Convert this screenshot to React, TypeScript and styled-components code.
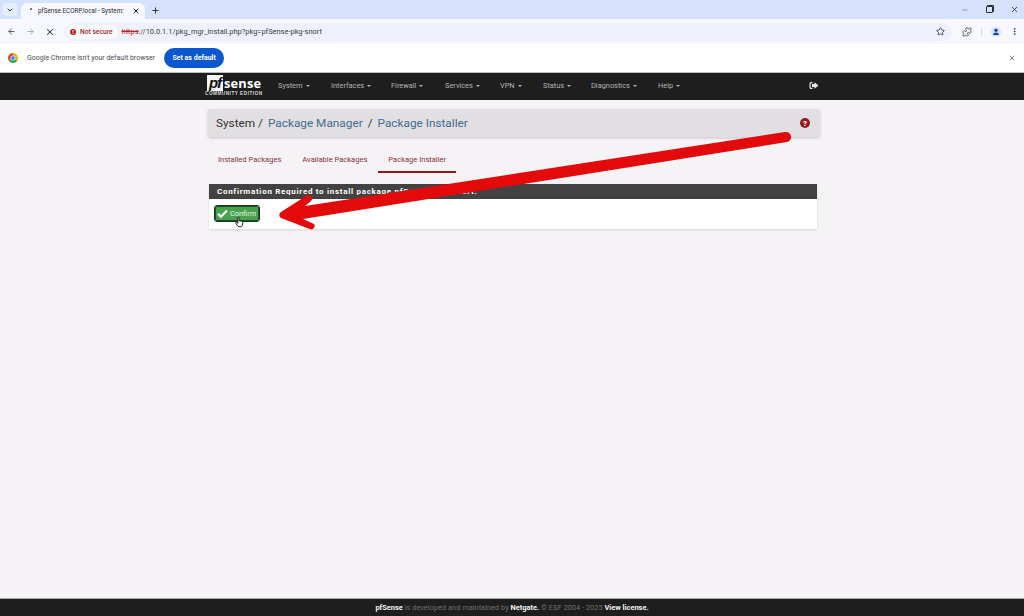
import styled, { createGlobalStyle } from "styled-components";
import { ArrowLeft, ArrowRight, X, Plus, ChevronDown, Minus, Star, Puzzle, EllipsisVertical, User } from "lucide-react";

const GlobalStyle = createGlobalStyle`
    html, body {
        margin: 0;
        padding: 0;
        height: 100%;
        overflow: hidden;
    }
    #root {
        height: 100%;
    }
`;

const Page = styled.div`
    position: relative;
    display: flex;
    flex-direction: column;
    height: 616px;
    background-color: #f5f3f6;
    font-family: Roboto, "Liberation Sans", sans-serif;
    overflow: hidden;
`;

const TabStrip = styled.div`
    display: flex;
    align-items: flex-end;
    height: 19px;
    flex-shrink: 0;
    background-color: #d6e2fb;
    color: #2a2d33;
`;

const TabMenu = styled.div`
    display: flex;
    align-items: center;
    justify-content: center;
    width: 14px;
    height: 13px;
    margin: 0 4px 3px 3px;
    border-radius: 4px;
    background-color: #e6eefc;
`;

const ActiveTab = styled.div`
    display: flex;
    align-items: center;
    width: 124px;
    height: 16px;
    box-sizing: border-box;
    padding: 0 5px 0 9px;
    border-radius: 6px 6px 0 0;
    background-color: #f6f8fe;
    font-size: 6.3px;
`;

const TabSpinner = styled.span`
    width: 2px;
    height: 2px;
    margin: 0 6px 5px 0;
    border-radius: 50%;
    background-color: #555;
`;

const TabTitle = styled.span`
    flex: 1;
    white-space: nowrap;
`;

const NewTab = styled.div`
    display: flex;
    align-items: center;
    margin: 0 0 4px 6px;
`;

const WindowControls = styled.div`
    display: flex;
    align-items: center;
    gap: 17px;
    margin: 0 5px 5px auto;
`;

const RestoreIcon = styled.span`
    width: 5px;
    height: 5px;
    border: 1px solid #2a2d33;
    border-radius: 1px;
    box-shadow: 1px -1px 0 0 #2a2d33;
`;

const Toolbar = styled.div`
    display: flex;
    align-items: center;
    height: 25px;
    flex-shrink: 0;
    padding: 0 5px 0 7px;
    background-color: #f6f8fe;
`;

const NavButtons = styled.div`
    display: flex;
    align-items: center;
    gap: 10px;
    width: 57px;
`;

const AddressBar = styled.div`
    display: flex;
    align-items: center;
    width: 888px;
    height: 18px;
    box-sizing: border-box;
    padding: 0 7px 0 3px;
    border-radius: 9px;
    background-color: #eef1fb;
`;

const SecurityChip = styled.div`
    display: flex;
    align-items: center;
    gap: 4px;
    height: 14px;
    padding: 0 5px 0 3px;
    margin-right: 4px;
    border-radius: 7px;
    background-color: #f8f9fe;
    color: #a52a2a;
    font-size: 6.7px;
    font-weight: 500;
`;

const AlertDot = styled.span`
    display: flex;
    align-items: center;
    justify-content: center;
    width: 6px;
    height: 6px;
    border-radius: 50%;
    background-color: #b3261e;
    color: #fff;
    font-size: 5px;
    font-weight: 700;
`;

const Url = styled.span`
    flex: 1;
    color: #3c4043;
    font-size: 7.45px;
`;

const Struck = styled.span`
    color: #b3261e;
    text-decoration: line-through;
`;

const ToolbarIcons = styled.div`
    display: flex;
    align-items: center;
    margin-left: 10px;
    gap: 9px;
    color: #3c4043;
`;

const Divider = styled.span`
    width: 1px;
    height: 8px;
    background-color: #d4d8e2;
`;

const Avatar = styled.span`
    display: flex;
    align-items: center;
    justify-content: center;
    width: 10px;
    height: 10px;
    border-radius: 50%;
    background-color: #d3e3fd;
    color: #1f3f9e;
`;

const InfoBar = styled.div`
    display: flex;
    align-items: center;
    height: 29px;
    flex-shrink: 0;
    box-sizing: border-box;
    padding: 0 8px 0 8px;
    background-color: #ffffff;
    color: #4a4d52;
    font-size: 7px;
    border-bottom: 1px solid #bdbdbd;
`;

const InfoText = styled.span`
    margin-left: 9px;
`;

const DefaultButton = styled.button`
    height: 20px;
    width: 60px;
    margin-left: 9px;
    padding: 0;
    border: none;
    border-radius: 10px;
    background-color: #0b57d0;
    color: #fff;
    font-family: inherit;
    font-size: 7px;
    font-weight: 700;
`;

const InfoClose = styled.span`
    display: flex;
    margin-left: auto;
    color: #555;
`;

const NavBar = styled.nav`
    display: flex;
    align-items: center;
    height: 27px;
    flex-shrink: 0;
    box-sizing: border-box;
    padding: 0 0 2px 205px;
    background-color: #1e1e1e;
    color: #b4b4b4;
    font-size: 7.4px;
`;

const Logo = styled.div`
    display: flex;
    flex-direction: column;
    width: 57px;
    margin: 1px 16px 0 0;
    color: #fff;
`;

const LogoTop = styled.div`
    display: flex;
    align-items: center;
    height: 16px;
    padding-left: 2px;
`;

const LogoBox = styled.span`
    width: 16px;
    height: 16px;
    background-color: #f4f4f4;
    color: #111;
    font: italic 700 15px/15px "Liberation Sans", sans-serif;
    letter-spacing: -1px;
    text-align: center;
`;

const LogoWord = styled.span`
    margin-left: 1px;
    font: 700 12.8px/16px "Open Sans", sans-serif;
    letter-spacing: 0.2px;
`;

const LogoEdition = styled.span`
    font: 700 4.7px/6px "Liberation Sans", sans-serif;
    letter-spacing: 0.5px;
    white-space: nowrap;
    color: #d8d8d8;
`;

const NavItem = styled.span<{ $width: number }>`
    display: flex;
    align-items: center;
    gap: 2px;
    width: ${(p) => p.$width}px;
    white-space: nowrap;
`;

const Caret = styled.span`
    width: 0;
    height: 0;
    margin-left: 1px;
    border-left: 2px solid transparent;
    border-right: 2px solid transparent;
    border-top: 2px solid #b4b4b4;
`;

const Logout = styled.span`
    display: flex;
    margin-left: 115px;
`;

const Main = styled.main`
    flex: 1;
    display: flex;
    flex-direction: column;
    padding: 9px 204px 0 208px;
`;

const Breadcrumb = styled.div`
    display: flex;
    align-items: center;
    height: 28px;
    box-sizing: border-box;
    padding: 0 10px 0 8px;
    border-radius: 3px;
    background-color: #e1dfe1;
    box-shadow: 0 1px 3px rgba(0, 0, 0, 0.2);
    font-size: 11.8px;
    color: #333;
`;

const Crumb = styled.span<{ $link?: boolean }>`
    margin-right: 5px;
    color: ${(p) => (p.$link ? "#3f6d93" : "#333")};
`;

const HelpDot = styled.span`
    display: flex;
    align-items: center;
    justify-content: center;
    width: 10px;
    height: 10px;
    margin-left: auto;
    border-radius: 50%;
    background-color: #8f1a1f;
    color: #fff;
    font-size: 8px;
    font-weight: 700;
`;

const Tabs = styled.div`
    display: flex;
    margin-top: 12px;
    height: 24px;
`;

const TabLink = styled.span<{ $active?: boolean }>`
    display: flex;
    align-items: center;
    height: 24px;
    box-sizing: border-box;
    padding: 0 10px 2px;
    margin-right: 1px;
    color: #8c2f3c;
    font-size: 7.55px;
    border-bottom: 2px solid ${(p) => (p.$active ? "#8f1a1f" : "transparent")};
`;

const Panel = styled.section`
    width: 608px;
    margin: 11px 0 0 1px;
    background-color: #fff;
    box-shadow: 0 1px 2px rgba(0, 0, 0, 0.12);
`;

const PanelHeading = styled.h2`
    height: 15px;
    margin: 0;
    padding-left: 8px;
    background-color: #424242;
    color: #fff;
    font-size: 8px;
    font-weight: 700;
    line-height: 15px;
    letter-spacing: 0.7px;
    white-space: nowrap;
`;

const PanelBody = styled.div`
    height: 30px;
    padding: 7px 0 0 6px;
    box-sizing: border-box;
`;

const ConfirmButton = styled.button`
    position: relative;
    display: flex;
    align-items: center;
    gap: 2px;
    width: 44px;
    height: 15px;
    box-sizing: border-box;
    padding: 0 0 0 1px;
    border: 1px solid #1f4f2a;
    outline: 1px solid #17361d;
    border-radius: 2px;
    background-color: #47a04b;
    color: #e8f5e6;
    font-family: inherit;
    font-size: 7.4px;
`;

const HandCursor = styled.svg`
    position: absolute;
    left: 19px;
    top: 8px;
`;

const Arrow = styled.svg`
    position: absolute;
    inset: 0;
    pointer-events: none;
`;

const Footer = styled.footer`
    display: flex;
    align-items: center;
    justify-content: center;
    height: 18px;
    flex-shrink: 0;
    background-color: #1e1e1e;
    color: #6f6f6f;
    font-size: 7.45px;
    border-top: 1px solid #a9a9a9;
    box-sizing: border-box;
    white-space: pre;
`;

const FooterStrong = styled.b`
    color: #f2f2f2;
`;

const navItems: [string, number][] = [
    ["System", 53],
    ["Interfaces", 60],
    ["Firewall", 54],
    ["Services", 55],
    ["VPN", 43],
    ["Status", 48],
    ["Diagnostics", 67],
    ["Help", 36],
];

export default function App() {
    return (
        <Page>
            <GlobalStyle />
            <TabStrip>
                <TabMenu><ChevronDown size={8} strokeWidth={3} /></TabMenu>
                <ActiveTab>
                    <TabSpinner />
                    <TabTitle>pfSense.ECORP.local - System: </TabTitle>
                    <X size={8} strokeWidth={3} />
                </ActiveTab>
                <NewTab><Plus size={9} strokeWidth={2.5} /></NewTab>
                <WindowControls>
                    <Minus size={8} color="#777" />
                    <RestoreIcon />
                    <X size={9} strokeWidth={2.2} />
                </WindowControls>
            </TabStrip>

            <Toolbar>
                <NavButtons>
                    <ArrowLeft size={9} color="#555" strokeWidth={2.5} />
                    <ArrowRight size={9} color="#aaa" strokeWidth={2.5} />
                    <X size={10} color="#333" strokeWidth={2.5} />
                </NavButtons>
                <AddressBar>
                    <SecurityChip><AlertDot>!</AlertDot>Not secure</SecurityChip>
                    <Url><Struck>https</Struck>://10.0.1.1/pkg_mgr_install.php?pkg=pfSense-pkg-snort</Url>
                    <Star size={9} color="#333" strokeWidth={2.2} />
                </AddressBar>
                <ToolbarIcons>
                    <Puzzle size={10} strokeWidth={2} />
                    <Divider />
                    <Avatar><User size={8} fill="#1f3f9e" strokeWidth={2} /></Avatar>
                    <EllipsisVertical size={9} strokeWidth={2.5} />
                </ToolbarIcons>
            </Toolbar>

            <InfoBar>
                <svg width="10" height="10" viewBox="0 0 20 20">
                    <path d="M10 10 L10 0 A10 10 0 0 1 18.66 15 Z" fill="#f4b400" />
                    <path d="M10 10 L18.66 15 A10 10 0 0 1 1.34 15 Z" fill="#2f9e50" />
                    <path d="M10 10 L1.34 15 A10 10 0 0 1 10 0 Z" fill="#db4437" />
                    <circle cx="10" cy="10" r="5" fill="#fff" />
                    <circle cx="10" cy="10" r="3.8" fill="#4285f4" />
                </svg>
                <InfoText>Google Chrome isn't your default browser</InfoText>
                <DefaultButton>Set as default</DefaultButton>
                <InfoClose><X size={8} strokeWidth={2.2} /></InfoClose>
            </InfoBar>

            <NavBar>
                <Logo>
                    <LogoTop>
                        <LogoBox>pf</LogoBox>
                        <LogoWord>sense</LogoWord>
                    </LogoTop>
                    <LogoEdition>COMMUNITY EDITION</LogoEdition>
                </Logo>
                {navItems.map(([label, width]) => (
                    <NavItem key={label} $width={width}>
                        {label}
                        <Caret />
                    </NavItem>
                ))}
                <Logout>
                    <svg width="10" height="9" viewBox="0 0 20 18" fill="#e6e6e6">
                        <path d="M7 2H4a3 3 0 0 0-3 3v8a3 3 0 0 0 3 3h3v-2.4H4.4a1 1 0 0 1-1-1V5.400a1 1 0 0 1 1-1H7Z" />
                        <path d="M11 2.500 19 9l-8 6.500V12H6V6h5Z" />
                    </svg>
                </Logout>
            </NavBar>

            <Main>
                <Breadcrumb>
                    <Crumb>System /</Crumb>
                    <Crumb $link>Package Manager</Crumb>
                    <Crumb>/</Crumb>
                    <Crumb $link>Package Installer</Crumb>
                    <HelpDot>?</HelpDot>
                </Breadcrumb>

                <Tabs>
                    <TabLink>Installed Packages</TabLink>
                    <TabLink>Available Packages</TabLink>
                    <TabLink $active>Package Installer</TabLink>
                </Tabs>

                <Panel>
                    <PanelHeading>Confirmation Required to install package pfSense-pkg-snort.</PanelHeading>
                    <PanelBody>
                        <ConfirmButton>
                            <svg width="11" height="9" viewBox="0 0 22 18">
                                <path d="M2 9.500 8 15.500 20 3" fill="none" stroke="#fff" strokeWidth="4.500" />
                            </svg>
                            Confirm
                            <HandCursor width="9" height="14" viewBox="0 0 22 28">
                                <path
                                    d="M7 2.500c1.500-1.300 3-.5 3 1.500v7l6 1c2.500.5 3.500 1.800 3 4l-1.200 6c-.4 2-1.500 3.500-3.500 3.500H10c-1.800 0-3-.8-4-2.400L2 17c-1-1.700 1-3.200 2.500-1.800L7 17Z"
                                    fill="#fff"
                                    stroke="#222"
                                    strokeWidth="2.400"
                                />
                            </HandCursor>
                        </ConfirmButton>
                    </PanelBody>
                </Panel>
            </Main>

            <Footer>
                <FooterStrong>pfSense</FooterStrong> is developed and maintained by <FooterStrong>Netgate.</FooterStrong> © ESF 2004 - 2025 <FooterStrong>View license.</FooterStrong>
            </Footer>

            <Arrow width="1024" height="616" viewBox="0 0 1024 616">
                <path
                    d="M785 132 A5 5 0 0 1 787 142 L303 219 L314 224 A3.500 3.500 0 0 1 311 229.500 L281 218 A3.500 3.500 0 0 1 281 212 L306 196 A3.500 3.500 0 0 1 311 201 L305 206 Z"
                    fill="#e20a0a"
                />
            </Arrow>
        </Page>
    );
}
